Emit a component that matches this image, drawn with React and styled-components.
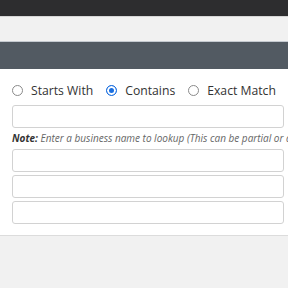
import React from "react";
import styled, { createGlobalStyle } from "styled-components";

const GlobalStyle = createGlobalStyle`
  html, body {
    margin: 0;
    padding: 0;
    background: #f1f1f1;
    overflow: hidden;
    font-family: "Open Sans", "Noto Sans", sans-serif;
  }
`;

const TopBar = styled.div`
  height: 16px;
  background: #2d2d2f;
  border-bottom: 1px solid #d6d6d6;
`;

const SubBar = styled.div`
  height: 24px;
  background: #f1f1f1;
  border-bottom: 1px solid #c5cad0;
`;

const TitleBar = styled.div`
  height: 27px;
  background: #525a62;
`;

const Panel = styled.div`
  background: #fff;
  padding: 11px 4px 11px 12px;
  border-bottom: 1px solid #dcdcdc;
  display: flex;
  flex-direction: column;
  overflow: hidden;
`;

const RadioRow = styled.div`
  display: flex;
  align-items: center;
  height: 20px;
  gap: 13px;
  margin-bottom: 5px;
`;

const RadioLabel = styled.label`
  display: flex;
  align-items: center;
  gap: 8px;
  font-size: 12.2px;
  color: #333;
  white-space: nowrap;
`;

const Radio = styled.input.attrs({ type: "radio" })`
  appearance: none;
  margin: 0;
  width: 11px;
  height: 11px;
  border-radius: 50%;
  border: 1px solid ${(p) => (p.checked ? "#1a6fe0" : "#8a8a8a")};
  box-sizing: border-box;
  background: ${(p) => (p.checked ? "#1a6fe0" : "#fff")};
  box-shadow: ${(p) => (p.checked ? "inset 0 0 0 2px #fff" : "none")};
`;

const Field = styled.input`
  display: block;
  box-sizing: border-box;
  width: 100%;
  height: 23px;
  border: 1px solid #d2d2d2;
  border-radius: 3px;
  background: #fff;
  margin-bottom: ${(p) => p.$gap || "3px"};
  outline: none;
`;

const Note = styled.div`
  font-size: 10px;
  font-style: italic;
  color: #666;
  white-space: nowrap;
  height: 14px;
  line-height: 14px;
  margin: 3px 0 4px;
  b {
    color: #333;
    font-weight: 700;
  }
`;

export default function App() {
  return (
    <>
      <GlobalStyle />
      <TopBar />
      <SubBar />
      <TitleBar />
      <Panel>
        <RadioRow>
          <RadioLabel>
            <Radio name="m" readOnly checked={false} />
            Starts With
          </RadioLabel>
          <RadioLabel>
            <Radio name="m" readOnly checked />
            Contains
          </RadioLabel>
          <RadioLabel>
            <Radio name="m" readOnly checked={false} />
            Exact Match
          </RadioLabel>
        </RadioRow>
        <Field $gap="0" />
        <Note>
          <b>Note:</b> Enter a business name to lookup (This can be partial or a full name)
        </Note>
        <Field />
        <Field />
        <Field $gap="0" />
      </Panel>
    </>
  );
}
